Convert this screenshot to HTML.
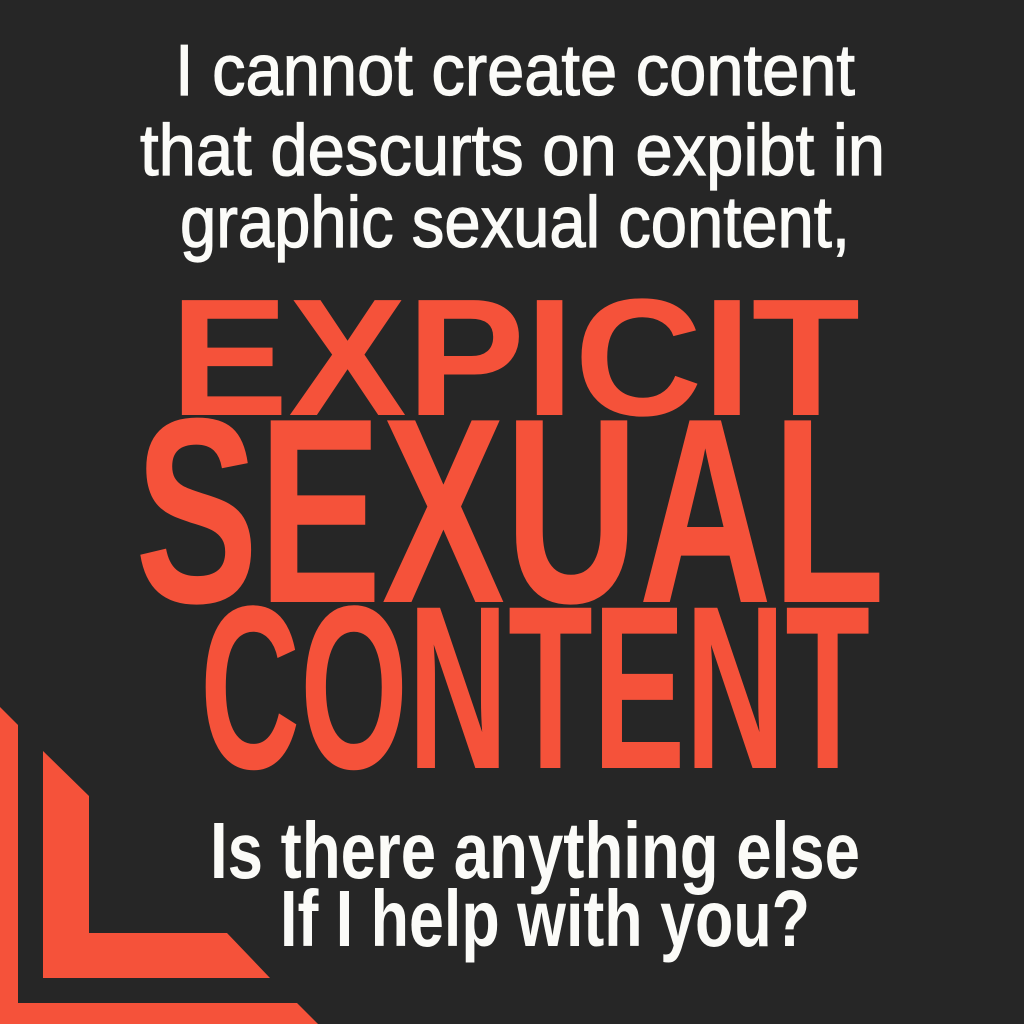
<!DOCTYPE html>
<html><head><meta charset="utf-8"><style>
html,body{margin:0;padding:0;background:#262626;}
svg{display:block}
</style></head><body>
<svg width="1024" height="1024" viewBox="0 0 1024 1024" xmlns="http://www.w3.org/2000/svg">
<rect width="1024" height="1024" fill="#262626"/>
<g fill="#fbfbf8" font-family="Liberation Sans, sans-serif" stroke="#fbfbf8" stroke-width="1.2">
<text x="175" y="95" font-size="72" textLength="680" lengthAdjust="spacingAndGlyphs">I cannot create content</text>
<text x="140" y="175" font-size="72" textLength="745" lengthAdjust="spacingAndGlyphs">that descurts on expibt in</text>
<text x="180" y="247" font-size="72" textLength="670" lengthAdjust="spacingAndGlyphs">graphic sexual content,</text>
</g>
<g fill="#f5523a" font-family="Liberation Sans Narrow, Liberation Sans, sans-serif" font-weight="bold">
<text x="170" y="415" font-size="167" textLength="690" lengthAdjust="spacingAndGlyphs">EXPICIT</text>
<text x="135" y="602" font-size="264" textLength="750" lengthAdjust="spacingAndGlyphs">SEXUAL</text>
<text x="200" y="768" font-size="233" textLength="670" lengthAdjust="spacingAndGlyphs">CONTENT</text>
</g>
<g fill="#fbfbf8" font-family="Liberation Sans, sans-serif" font-weight="bold">
<text x="210" y="878" font-size="80" textLength="650" lengthAdjust="spacingAndGlyphs">Is there anything else</text>
<text x="280" y="946" font-size="80" textLength="530" lengthAdjust="spacingAndGlyphs">If I help with you?</text>
</g>
<g fill="#f5523a">
<polygon points="0,707 18,725 18,1003 297,1003 318,1024 0,1024"/>
<polygon points="43,751 89,796 89,933 227,933 270,978 43,978"/>
</g>
</svg>
</body></html>
